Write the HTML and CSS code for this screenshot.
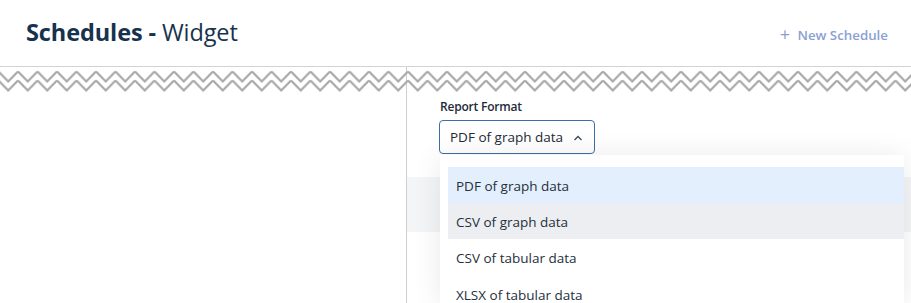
FILE: index.html
```html
<!DOCTYPE html>
<html>
<head>
    <title>Schedules - Widget</title>
    <meta name="viewport" content="width=device-width, initial-scale=1.0">
    <link rel="stylesheet" href="styles.css">
</head>
<body>
    <!-- Header -->
    <div class="page-header">
        <h1 class="page-title"><strong>Schedules -</strong> Widget</h1>
        <button class="new-btn"><span class="plus">+</span> New Schedule</button>
    </div>

    <!-- Body -->
    <div class="page-body">
        <svg class="zigzag" width="100%" height="30">
            <defs>
                <pattern id="zz" x="-1.5" y="0" width="19.5" height="30" patternUnits="userSpaceOnUse">
                    <path d="M0 3.5 L9.75 13.5 L19.5 3.5" fill="none" stroke="#a9a9a9" stroke-width="2.2"/>
                    <path d="M0 12.5 L9.75 22.5 L19.5 12.5" fill="none" stroke="#a9a9a9" stroke-width="2.2"/>
                </pattern>
            </defs>
            <rect width="100%" height="30" fill="url(#zz)"/>
        </svg>

        <div class="left-col"></div>

        <div class="right-col">
            <label class="field-label">Report Format</label>
            <div class="select-wrap">
                <div class="select-box">
                    <span>PDF of graph data</span>
                    <svg class="chevron" width="10" height="6" viewBox="0 0 10 6">
                        <path d="M1.5 5 L5 1.5 L8.5 5" fill="none" stroke="#3b4a5a" stroke-width="1.3"/>
                    </svg>
                </div>
                <!-- Dropdown -->
                <ul class="menu">
                    <li class="menu-item selected">PDF of graph data</li>
                    <li class="menu-item hover">CSV of graph data</li>
                    <li class="menu-item">CSV of tabular data</li>
                    <li class="menu-item">XLSX of tabular data</li>
                </ul>
            </div>
            <div class="row-shade"></div>
        </div>
    </div>
</body>
</html>
```

FILE: styles.css
```css
:root {
    --navy: #17324d;
    --line: #d3d3d3;
    --accent: #8c9fd4;
}

html, body {
    height: 303px;
    overflow: hidden;
}

body {
    margin: 0;
    font-family: "Open Sans", "Noto Sans", sans-serif;
    background: white;
    color: var(--navy);
}

.page-header {
    display: flex;
    justify-content: space-between;
    align-items: center;
    height: 66px;
    padding: 0 23px 0 26px;
    border-bottom: 1px solid var(--line);
}

.page-title {
    margin: 0;
    font-size: 23.5px;
    font-weight: 400;
    letter-spacing: -0.1px;
    position: relative;
    top: -1px;
}

.page-title strong {
    font-weight: 700;
}

.new-btn {
    background: none;
    border: none;
    color: var(--accent);
    font-family: inherit;
    font-size: 13.3px;
    font-weight: 600;
    padding: 0;
}

.new-btn .plus {
    font-size: 18px;
    font-weight: 400;
    margin-right: 4px;
    position: relative;
    top: 1px;
}

.page-body {
    position: relative;
    display: flex;
    height: 236px;
}

.zigzag {
    position: absolute;
    top: 1px;
    left: 0;
    pointer-events: none;
}

.left-col {
    width: 406px;
    border-right: 1px solid #cfcfcf;
    flex-shrink: 0;
}

.right-col {
    flex: 1;
    padding-top: 31px;
}

.field-label {
    display: block;
    margin-left: 33px;
    font-size: 12px;
    font-weight: 600;
    color: #1e2b38;
    letter-spacing: -0.2px;
}

.select-wrap {
    position: relative;
    margin: 5px 0 0 32px;
}

.select-box {
    display: inline-flex;
    align-items: center;
    gap: 10px;
    height: 32px;
    padding: 0 11px 0 10px;
    border: 1px solid #3d6ea6;
    border-radius: 4px;
    font-size: 13.5px;
    color: #1f2a36;
}

.chevron {
    margin-top: 1px;
}

.menu {
    position: absolute;
    top: 35px;
    left: 1px;
    width: 464px;
    height: 149px;
    margin: 0;
    padding: 12px 0 0 8px;
    overflow: hidden;
    list-style: none;
    background: white;
    box-shadow: 0 2px 28px rgba(0, 0, 0, 0.09);
    box-sizing: border-box;
    z-index: 2;
}

.menu-item {
    height: 37px;
    display: flex;
    align-items: center;
    padding-left: 8px;
    font-size: 13.5px;
    color: #25303c;
}

.menu-item.selected {
    background: #e3effc;
}

.menu-item.hover {
    background: #eceef1;
    height: 35px;
}

.row-shade {
    height: 55px;
    margin-top: 23px;
    background: #f4f5f7;
}
```
